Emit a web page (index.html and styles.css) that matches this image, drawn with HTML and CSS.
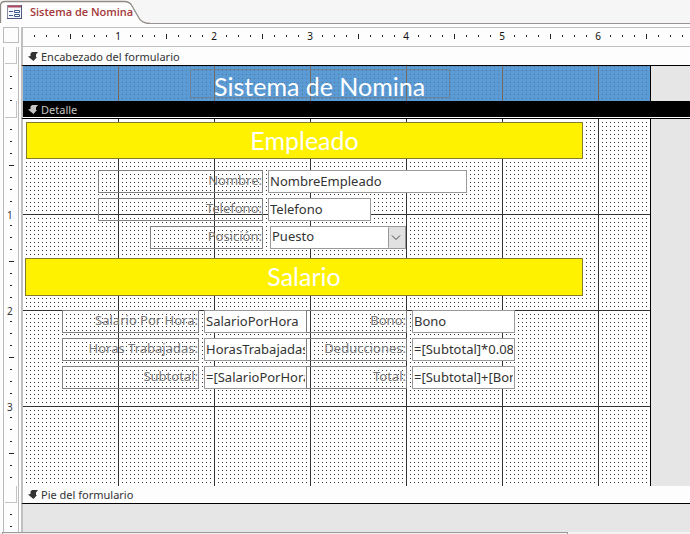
FILE: index.html
```html
<!DOCTYPE html>
<html lang="es">
<head>
<meta charset="utf-8">
<title>Sistema de Nomina</title>
<link rel="stylesheet" href="styles.css">
</head>
<body>
<nav class="tabs">
  <svg class="tab-shape" width="150" height="24" viewBox="0 0 150 24" aria-hidden="true">
    <path d="M0 24V5Q1 1.500 5 1.500H124Q130 1.500 132 6L139 18Q142 23.500 150 23.500V24Z" fill="#fdfdfd"/>
    <path d="M.5 23V5Q1 1.500 5 1.500H124Q130 1.500 132 6L139 18Q142 23.500 150 23.500" fill="none" stroke="#8f8a86" stroke-width="1.300"/>
  </svg>
  <a class="tab" href="#form">
    <svg width="15" height="14" viewBox="0 0 15 14" aria-hidden="true">
      <rect x=".5" y=".5" width="14" height="13" fill="#f4f6fb" stroke="#8c8a9c"/>
      <path d="M1 1.500H14" stroke="#b04a62" stroke-width="2"/>
      <path d="M14.500 0V14M0 13.500H15" stroke="#4d5680"/>
      <path d="M2 6.500H6M2 10.500H6" stroke="#3e5a8c"/>
      <path d="M7.500 5.500H12.500V7.500H7.500ZM7.500 9.500H12.500V11.500H7.500Z" fill="#fff" stroke="#3e5a8c"/>
    </svg>
    Sistema de Nomina
  </a>
</nav>

<main id="form" class="designer">
  <div class="corner"></div>
  <div class="ruler-x"><span>1</span><span>2</span><span>3</span><span>4</span><span>5</span><span>6</span></div>

  <div class="gutter"><i class="selector"></i></div>
  <h2 class="bar"><svg width="10" height="9" viewBox="0 0 10 9" aria-hidden="true"><path d="M4 0H10L8 2.500V5H9L5.500 9L0 4.500L2.500 4V1.500Z" fill="currentColor"/></svg>Encabezado del formulario</h2>

  <div class="gutter"><i class="ticks"></i></div>
  <section class="area"><div class="sheet sheet-blue"><h1 class="title">Sistema de Nomina</h1></div></section>

  <div class="gutter"><i class="selector"></i></div>
  <h2 class="bar bar-active"><svg width="10" height="9" viewBox="0 0 10 9" aria-hidden="true"><path d="M4 0H10L8 2.500V5H9L5.500 9L0 4.500L2.500 4V1.500Z" fill="currentColor"/></svg>Detalle</h2>

  <div class="gutter"><div class="ticks ticks-detail"><span>1</span><span>2</span><span>3</span></div></div>
  <section class="area">
    <div class="sheet sheet-detail">
      <h3 class="band">Empleado</h3>
      <div class="person">
        <label for="nombre">Nombre:</label><input id="nombre" class="wide" value="NombreEmpleado">
        <label for="telefono">Telefono:</label><input id="telefono" value="Telefono">
        <label for="puesto" class="short">Posición:</label>
        <div class="combo"><select id="puesto"><option>Puesto</option></select><svg width="17" height="20" viewBox="0 0 17 20" aria-hidden="true"><path d="M.5 0V20" stroke="#999"/><path d="M4 8L8 12L12 8" fill="none" stroke="#444"/></svg></div>
      </div>
      <h3 class="band band-salary">Salario</h3>
      <div class="pay">
        <label for="hora">Salario Por Hora:</label><input id="hora" value="SalarioPorHora">
        <label for="bono" class="second">Bono:</label><input id="bono" value="Bono">
        <label for="horas">Horas Trabajadas:</label><input id="horas" value="HorasTrabajadas">
        <label for="deduc" class="second">Deducciones:</label><input id="deduc" value="=[Subtotal]*0.08">
        <label for="subtotal">Subtotal:</label><input id="subtotal" value="=[SalarioPorHora]">
        <label for="total" class="second">Total:</label><input id="total" value="=[Subtotal]+[Bono]">
      </div>
    </div>
  </section>

  <div class="gutter"><i class="selector"></i></div>
  <h2 class="bar bar-footer"><svg width="10" height="9" viewBox="0 0 10 9" aria-hidden="true"><path d="M4 0H10L8 2.500V5H9L5.500 9L0 4.500L2.500 4V1.500Z" fill="currentColor"/></svg>Pie del formulario</h2>

  <div class="gutter"><i class="ticks"></i></div>
  <section class="area"></section>
</main>
<footer class="scroll"><div></div></footer>
</body>
</html>
```

FILE: styles.css
```css
* { box-sizing: border-box; }

body {
  margin: 0;
  min-height: 100vh;
  display: flex;
  flex-direction: column;
  background: #fdfdfd;
  color: #333;
  font: 13px/20px "Noto Sans", "Open Sans", sans-serif;
}

h1, h2, h3 { margin: 0; font-weight: 400; }

/* Document tab */
.tabs {
  position: relative;
  height: 24px;
  background: #f6f6f6;
  border-bottom: 1px solid #9a9592;
}
.tab-shape { position: absolute; left: 0; top: 0; }
.tab {
  position: relative;
  display: flex;
  align-items: center;
  gap: 8px;
  height: 24px;
  padding-left: 7px;
  color: #a4373a;
  font: 600 11px/24px "Open Sans", sans-serif;
  text-decoration: none;
}

/* Designer surface: ruler column and form column */
.designer {
  flex: 1;
  display: grid;
  grid-template-columns: 21px minmax(0, 1fr);
  grid-template-rows: 20px 19px 35px 18px minmax(366px, 1fr) 18px 28px;
  padding-top: 3px;
}

.corner {
  width: 16px;
  height: 16px;
  margin-left: 3px;
  border: 1px solid #bbb;
}
.ruler-x {
  display: flex;
  overflow: hidden;
  padding-left: 47px;
  border: solid #c0c0c0;
  border-width: 1px 0 1px 2px;
  color: #111;
  font: 10px/16px "Noto Sans", sans-serif;
  background:
    linear-gradient(#222, #222) 623px 6px / 1px 5px no-repeat,
    repeating-linear-gradient(90deg, transparent 0 11px, #222 11px 12px) 0 7px / 100% 2px no-repeat;
}
.ruler-x span {
  flex: none;
  width: 96px;
  text-align: center;
  background:
    linear-gradient(#222, #222) 0 6px / 1px 5px no-repeat,
    linear-gradient(#fdfdfd, #fdfdfd) center / 12px 100% no-repeat;
}

.gutter {
  width: 16px;
  margin-left: 3px;
  border: solid #bbb;
  border-width: 0 1px;
}
.selector {
  display: block;
  width: 12px;
  height: 17px;
  margin-left: 1px;
  border: solid #c4c4c4;
  border-width: 0 1px 1px 0;
}
.ticks {
  display: block;
  height: 100%;
  overflow: hidden;
  background: repeating-linear-gradient(transparent 0 10px, #222 10px 11px, transparent 11px 12px) 6px 0 / 2px 100% no-repeat;
}
.ticks-detail {
  padding-top: 48px;
  background:
    linear-gradient(#222, #222) 5px 46px / 5px 1px no-repeat,
    repeating-linear-gradient(transparent 0 10px, #222 10px 11px, transparent 11px 12px) 6px 0 / 2px 100% no-repeat;
}
.ticks span {
  display: block;
  height: 96px;
  padding-left: 3px;
  font: 10px/96px "Noto Sans", sans-serif;
  background:
    linear-gradient(#222, #222) 5px 94px / 5px 1px no-repeat,
    linear-gradient(#fdfdfd, #fdfdfd) 0 center / 14px 12px no-repeat;
}

.bar {
  display: flex;
  align-items: center;
  gap: 3px;
  padding-left: 5px;
  border-left: 2px solid #c0c0c0;
  border-bottom: 1px solid #000;
  color: #333;
  font: 11px/17px "Noto Sans", sans-serif;
}
.bar-active {
  background: linear-gradient(#fff, #fff) 0 16px / 100% 1px no-repeat, #000;
  color: #c4c4c4;
}

.area {
  display: flex;
  border-left: 2px solid #c0c0c0;
  background: #e6e6e6;
}
.sheet {
  --dot: #333;
  --line: #333;
  width: 628px;
  border-right: 1px solid #000;
  background:
    linear-gradient(90deg, var(--line) 1px, transparent 1px) 95px 0 / 96px 100%,
    conic-gradient(at 1px 1px, transparent 75%, var(--dot) 0) 3px 0 / 4px 4px,
    #fff;
}
.sheet-blue {
  --dot: #59748f;
  --line: #78685a;
  padding-top: 3px;
  background-color: #5b9bd5;
}
.title {
  width: 260px;
  height: 29px;
  margin-left: 167px;
  padding-left: 23px;
  border: 1px solid #68839b;
  color: #fff;
  font: 25px/32px Lato, "Noto Sans", sans-serif;
  white-space: nowrap;
}
.sheet-detail {
  padding-top: 3px;
  background:
    linear-gradient(90deg, var(--line) 1px, transparent 1px) 95px 0 / 96px 100%,
    linear-gradient(var(--line) 1px, transparent 1px) 0 95px / 100% 96px,
    conic-gradient(at 1px 1px, transparent 75%, var(--dot) 0) 3px 3px / 4px 4px,
    #fff;
}

.band {
  width: 557px;
  height: 37px;
  margin-left: 3px;
  border: 1px solid #857b2a;
  background: #fff200;
  color: #fff;
  font: 25px/34px Lato, "Noto Sans", sans-serif;
  text-align: center;
}
.band-salary {
  width: 558px;
  height: 38px;
  margin-left: 2px;
}

/* Bound controls */
.person, .pay {
  display: grid;
  justify-content: start;
  grid-auto-rows: 23px;
  row-gap: 5px;
}
.person {
  grid-template-columns: 165px 200px;
  column-gap: 5px;
  padding: 11px 0 9px 75px;
}
.pay {
  grid-template-columns: 137px 103px 95px 103px;
  column-gap: 5px;
  padding: 14px 0 0 39px;
}
label {
  border: 1px solid #7f7f7f;
  color: #777;
  line-height: 18px;
  text-align: right;
  white-space: nowrap;
}
.short { margin-left: 52px; }
.second { margin-left: -6px; }
input, select {
  width: 103px;
  height: 23px;
  margin: 0;
  padding: 0 1px 2px;
  border: 1px solid #999;
  border-radius: 0;
  background: #fff;
  color: #333;
  font: 13px/19px "Noto Sans", sans-serif;
}
.wide { width: 199px; }
.combo {
  position: relative;
  width: 136px;
  margin-left: 2px;
}
.combo select { width: 100%; appearance: none; }
.combo svg {
  position: absolute;
  top: 1px;
  right: 1px;
  height: 21px;
  background: #e1e1e1;
  pointer-events: none;
}

.scroll {
  height: 2px;
  background: #f3f3f3;
}
.scroll div {
  width: 82%;
  height: 2px;
  margin-left: 2px;
  border: solid #999;
  border-width: 1px 1px 0;
}
```
